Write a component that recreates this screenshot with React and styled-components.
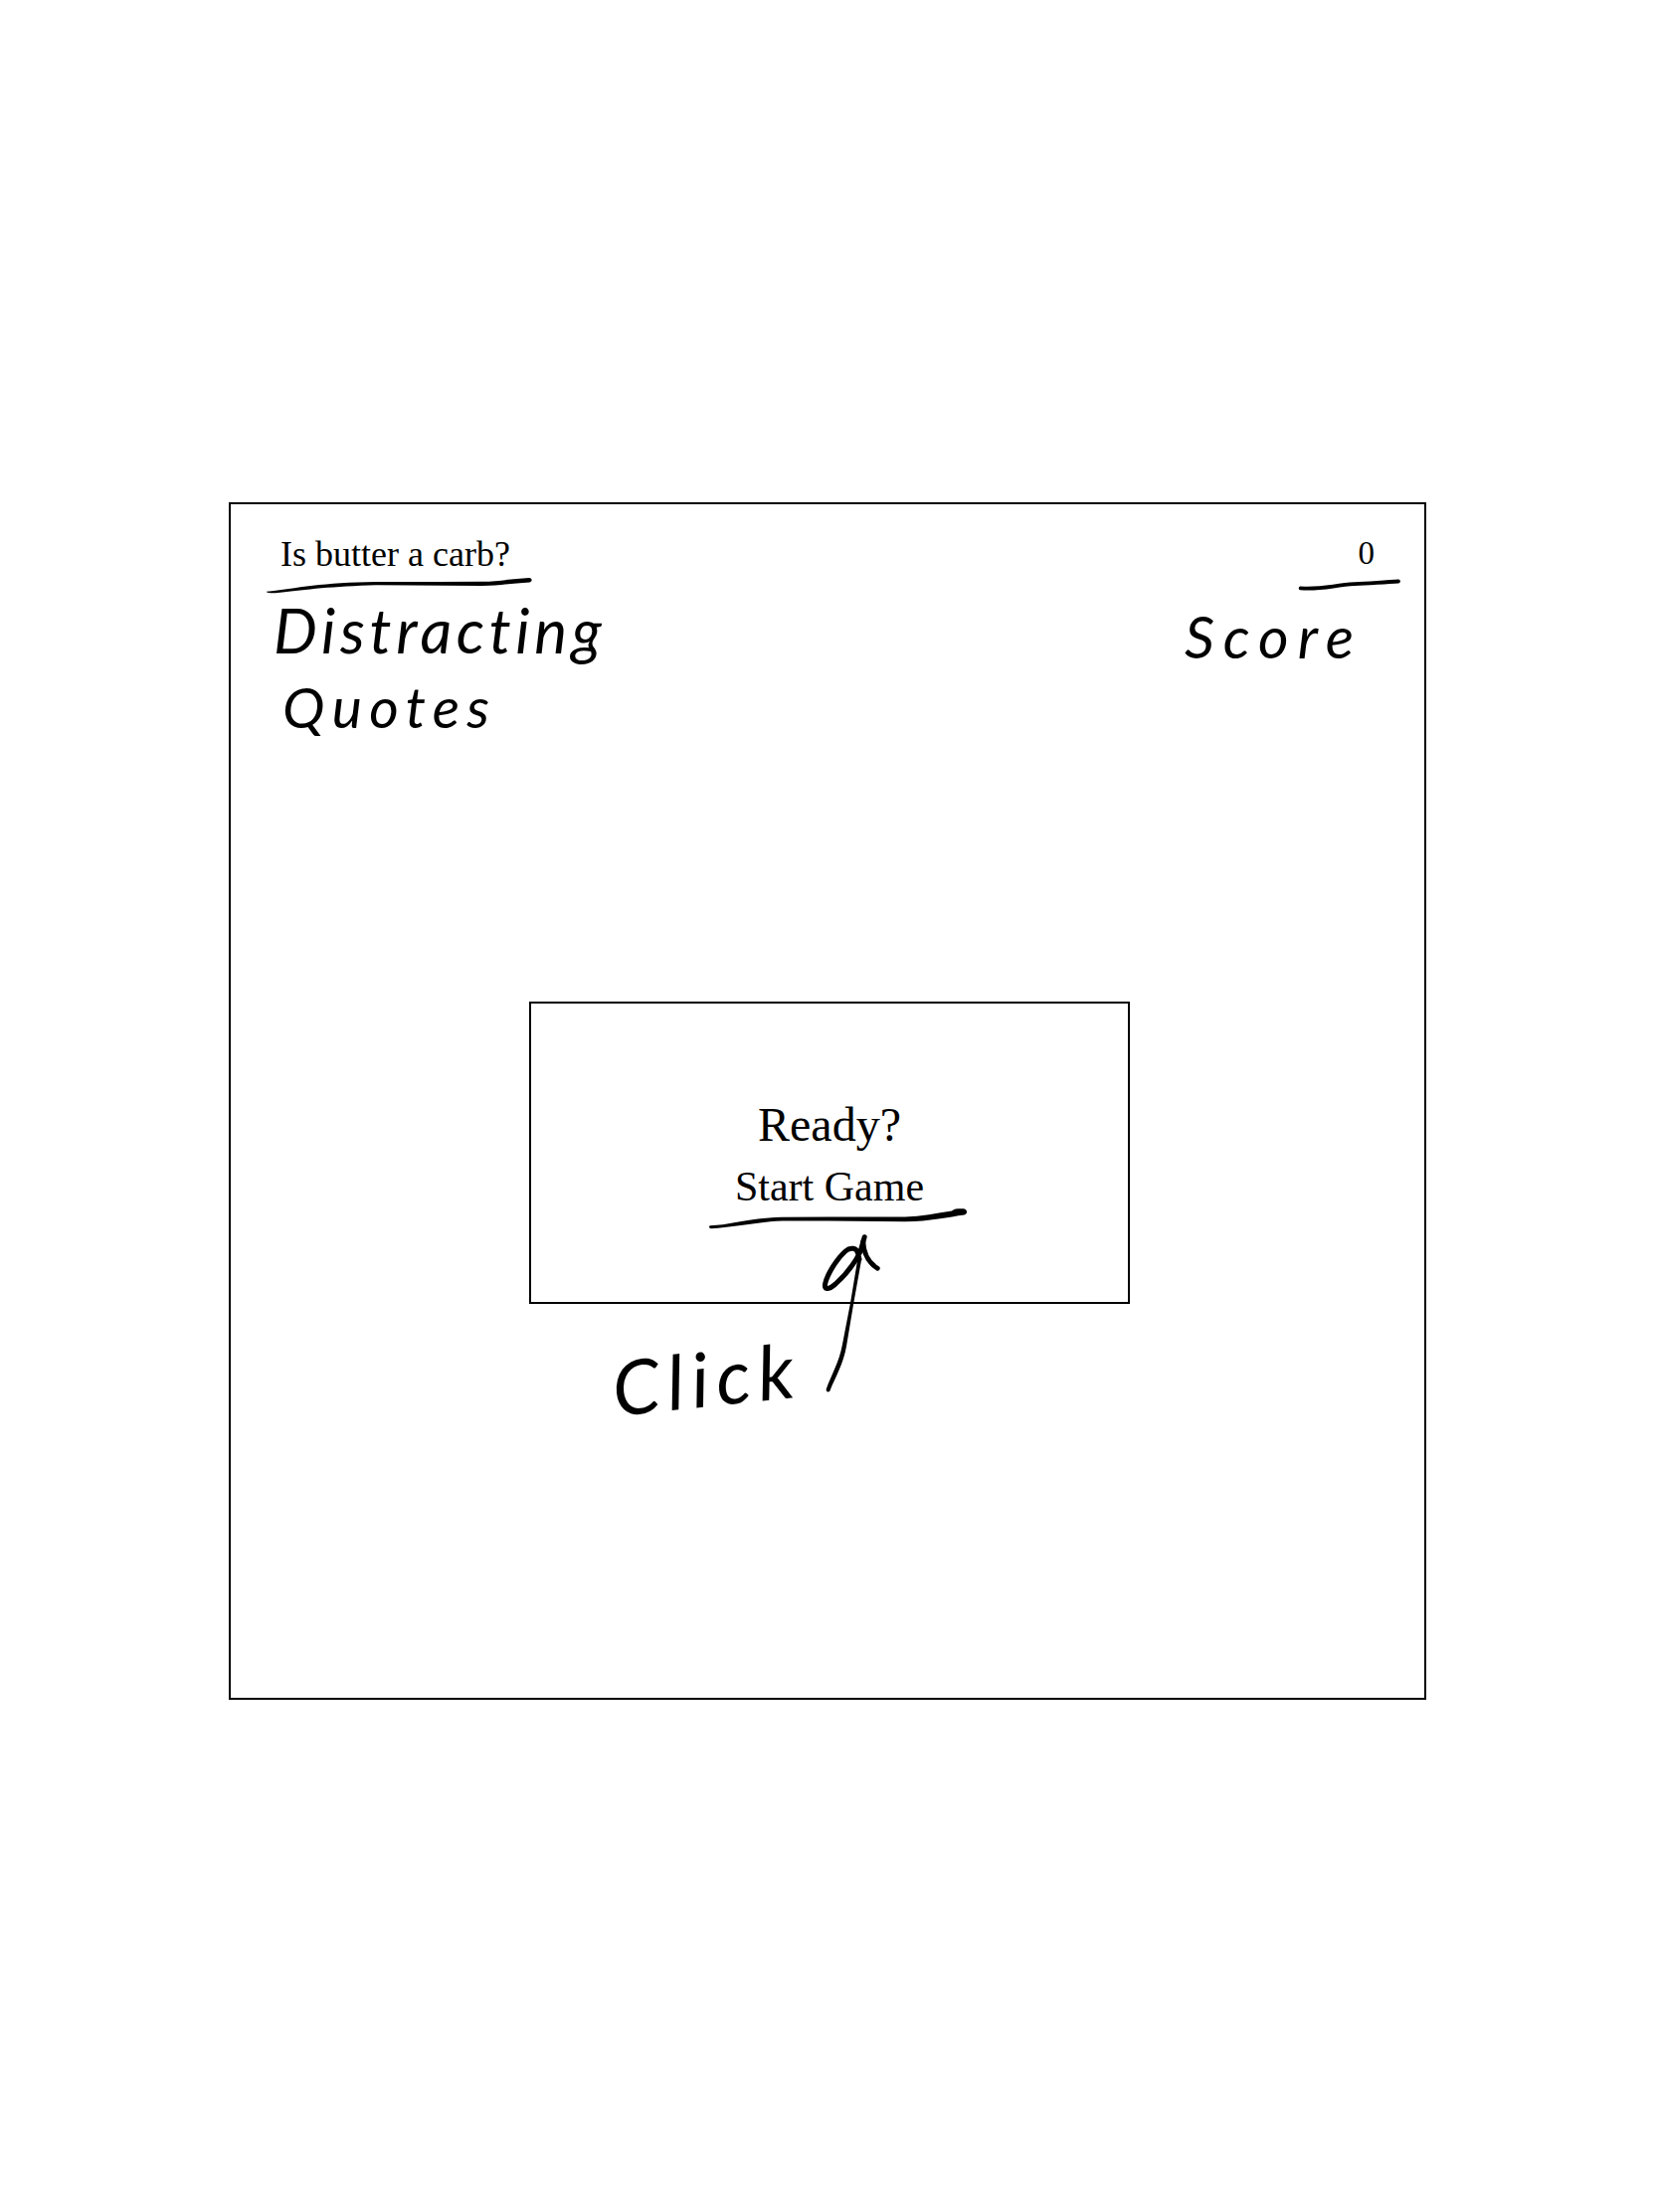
import React from "react";
import styled, { createGlobalStyle } from "styled-components";

const GlobalStyle = createGlobalStyle`
  *, *::before, *::after { box-sizing: border-box; }
  body {
    margin: 0;
    background: #fff;
    color: #000;
    font-family: "Liberation Serif", "Times New Roman", serif;
  }
`;

const Page = styled.main`
  position: relative;
  width: 1668px;
  height: 2224px;
  padding: 505px 0 0 230px;
  overflow: hidden;
  background: #fff;
`;

const Board = styled.section`
  display: flex;
  flex-direction: column;
  align-items: center;
  width: 1204px;
  height: 1204px;
  border: 2px solid #000;
`;

const TopBar = styled.header`
  display: flex;
  flex: none;
  justify-content: space-between;
  align-items: flex-start;
  width: 100%;
  height: 500px;
  padding: 30px 50px 0;
`;

const Quote = styled.div`
  font-size: 36px;
  line-height: 40px;
  white-space: nowrap;
`;

const Score = styled.div`
  font-size: 33px;
  line-height: 39px;
`;

const StartPanel = styled.div`
  display: flex;
  flex-direction: column;
  align-items: center;
  width: 604px;
  height: 304px;
  margin-left: 4px;
  padding-top: 93px;
  border: 2px solid #000;
`;

const Heading = styled.h1`
  margin: 0;
  font-size: 48px;
  font-weight: 400;
  line-height: 58px;
`;

const StartButton = styled.button`
  margin: 3px 0 0;
  padding: 0;
  border: 0;
  background: none;
  color: inherit;
  font-family: inherit;
  font-size: 42px;
  line-height: 60px;
  cursor: pointer;
`;

const Note = styled.span`
  position: absolute;
  left: ${(p) => p.$x}px;
  top: ${(p) => p.$y}px;
  font-family: Lato, "Open Sans", sans-serif;
  font-style: italic;
  font-size: ${(p) => p.$size}px;
  line-height: 1;
  letter-spacing: ${(p) => p.$spacing || 0}px;
  white-space: nowrap;
  transform: rotate(${(p) => p.$tilt || 0}deg);
  transform-origin: 0 80%;
  pointer-events: none;
`;

const Ink = styled.svg`
  position: absolute;
  inset: 0;
  width: 1668px;
  height: 2224px;
  pointer-events: none;
`;

const notes = [
  { text: "Distracting", x: 275, y: 602, size: 62, spacing: 4.7 },
  { text: "Quotes", x: 284, y: 682, size: 57, spacing: 7.4 },
  { text: "Score", x: 1191, y: 610, size: 59, spacing: 9 },
  { text: "Click", x: 618, y: 1357, size: 76, spacing: 7.5, tilt: -6 },
];

function PenStrokes() {
  return (
    <Ink viewBox="0 0 1668 2224" aria-hidden="true">
      {/* quote underline */}
      <path d="M268 594.8C298 591.5 325 585.4 378 585L440 585.1L485 584.8C502 584.4 515 581.8 532 581C535.4 581.2 535.4 585 532.5 585.4C514 586.2 501 589.1 484 589L378 588.2C335 589.4 306 592.8 284 595.6C277 596.6 268 596.8 268 594.8Z" />
      {/* arrow shaft */}
      <path d="M830.8 1396.4C836 1382 843.5 1370 846.8 1352.5L855 1310L862.6 1264L866.2 1266L858.3 1310L851.2 1352.5C848 1372 840 1384 834.4 1398.4C832.6 1400.6 830 1399 830.8 1396.4Z" />
      <g fill="none" stroke="#000" strokeLinecap="round" strokeLinejoin="round">
        {/* score underline */}
        <path strokeWidth="3.8" d="M1307.6 591.3C1330 592.8 1340 588.4 1362 587.2C1378 586 1392 585.6 1406 584.5" />
        {/* arrow head */}
        <path strokeWidth="5" d="M869.2 1243.7L865.2 1258C858 1273 850 1282 840 1291C833 1297 828 1297.5 829.8 1290C832 1281 841 1266 850 1258C855 1253.5 861.5 1254.5 862.5 1260L864 1266" />
        <path strokeWidth="4.8" d="M867.8 1248C868.2 1261 874 1270 882.3 1275.3" />
      </g>
      {/* start underline */}
      <path d="M714 1232.2C738 1231.4 750 1224.8 786 1223.8L833 1223.4L910 1223.6C926 1222.9 942 1219.6 957 1217.4C960 1214.8 964 1215.2 969 1215.2C973 1216 973 1220.6 969.5 1221.5C954 1223.5 935 1228.2 910 1228.2L833 1227.4L787 1227.6C762 1228.6 743 1233.4 715 1235.2C712.4 1234.8 712.6 1232.6 714 1232.2Z" />
    </Ink>
  );
}

export default function App() {
  return (
    <>
      <GlobalStyle />
      <Page>
        <Board>
          <TopBar>
            <Quote>Is butter a carb?</Quote>
            <Score>0</Score>
          </TopBar>
          <StartPanel>
            <Heading>Ready?</Heading>
            <StartButton type="button">Start Game</StartButton>
          </StartPanel>
        </Board>
        {notes.map((n) => (
          <Note
            key={n.text}
            $x={n.x}
            $y={n.y}
            $size={n.size}
            $spacing={n.spacing}
            $tilt={n.tilt}
          >
            {n.text}
          </Note>
        ))}
        <PenStrokes />
      </Page>
    </>
  );
}
